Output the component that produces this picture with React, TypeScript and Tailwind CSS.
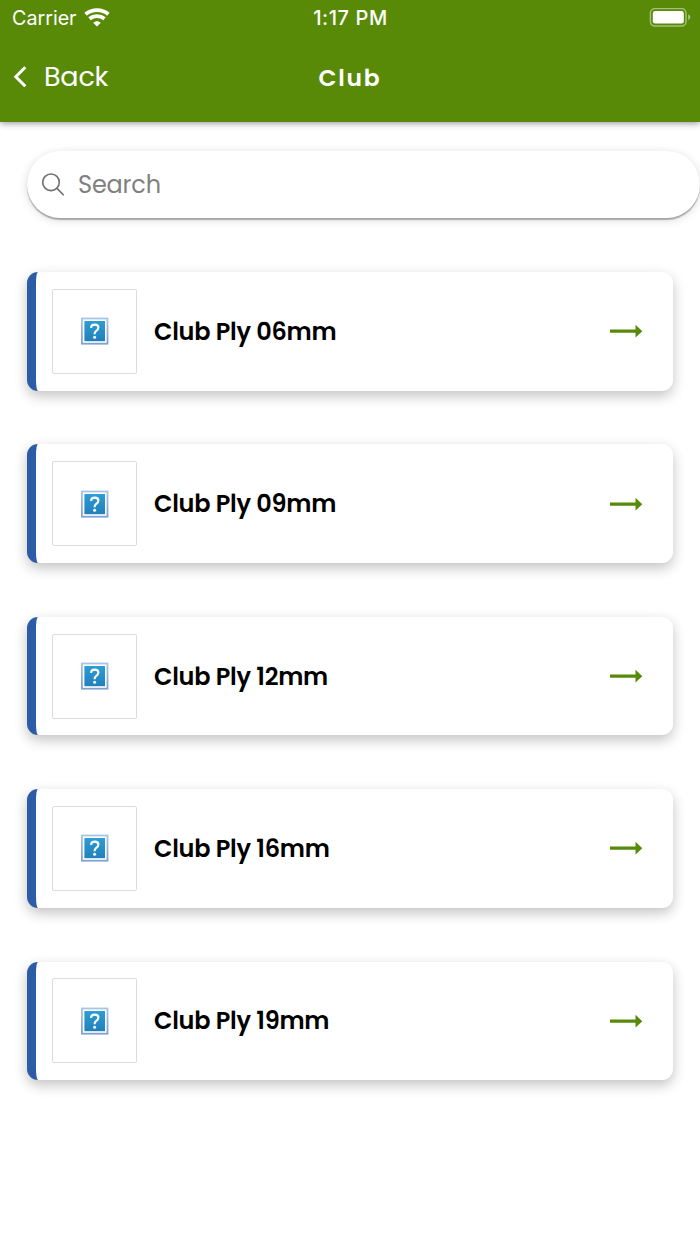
interface Product {
    id: number;
    name: string;
}

const products: Product[] = [
    { id: 1, name: 'Club Ply 06mm' },
    { id: 2, name: 'Club Ply 09mm' },
    { id: 3, name: 'Club Ply 12mm' },
    { id: 4, name: 'Club Ply 16mm' },
    { id: 5, name: 'Club Ply 19mm' },
];

function WifiIcon() {
    return (
        <svg width="26" height="20" viewBox="0 0 26 20" fill="none" stroke="white" strokeWidth="3.8">
            <path d="M1.6 6.2C8 .7 18 .7 24.4 6.2" />
            <path d="M5.5 10.8C9.8 7.2 16.2 7.2 20.5 10.8" />
            <path d="M9.2 14.7C11.4 12.6 14.6 12.6 16.8 14.7L13 18.6Z" fill="white" stroke="none" />
        </svg>
    );
}

function BatteryIcon() {
    return (
        <svg width="42" height="20" viewBox="0 0 42 20" fill="none">
            <rect x="1.4" y=".6" width="35.6" height="17.4" rx="4.5" stroke="white" strokeOpacity=".45" strokeWidth="1.5" />
            <rect x="3.8" y="3.1" width="31" height="12.4" rx="2.3" fill="white" />
            <path d="M39.2 6.2Q41.4 7 41.4 9.1T39.2 12.1Z" fill="white" fillOpacity=".5" />
        </svg>
    );
}

function MissingImage() {
    return (
        <svg width="28" height="28" viewBox="0 0 28 28">
            <defs>
                <linearGradient id="missingFill" x1="0" y1="0" x2="0" y2="1">
                    <stop offset="0%" stopColor="#2d9dd5" />
                    <stop offset="100%" stopColor="#2180ba" />
                </linearGradient>
                <linearGradient id="missingFrame" x1="0" y1="0" x2="0" y2="1">
                    <stop offset="0%" stopColor="#a9c4e7" />
                    <stop offset="100%" stopColor="#7fa1d0" />
                </linearGradient>
            </defs>
            <rect x=".9" y="1.5" width="25.6" height="25.2" fill="white" stroke="url(#missingFrame)" strokeWidth="1.8" />
            <rect x="3.4" y="4" width="20.6" height="20.2" fill="url(#missingFill)" />
            <path d="M10 10.9C10.1 8.6 11.6 7.6 13.7 7.6C16 7.6 17.4 8.8 17.4 10.6C17.4 12.3 16.5 13 15.3 13.8C14.1 14.6 13.6 15.2 13.6 16.7V17.2" fill="none" stroke="white" strokeWidth="2.1" />
            <circle cx="13.6" cy="20.2" r="1.5" fill="white" />
        </svg>
    );
}

function ProductCard({ name }: { name: string }) {
    return (
        <li className="flex h-[118.5px] items-center rounded-[11px] border-l-[9px] border-[#2b5ca5] bg-white pl-4 pr-[30px] shadow-[0_5px_13px_rgba(0,0,0,0.24)]">
            <div className="flex size-[85px] shrink-0 items-center justify-center rounded-[2px] border border-[#dcdcdc]">
                <MissingImage />
            </div>
            <h2 className="ml-[17px] flex-1 whitespace-nowrap pt-[1px] text-[24px] font-semibold leading-8 tracking-[-0.25px] text-black">{name}</h2>
            <svg width="34" height="16" viewBox="0 0 34 16" fill="#568a08">
                <path d="M1 6.5H26.5V1.8L33.3 8.2L26.5 14.6V9.8H1Z" />
            </svg>
        </li>
    );
}

export default function App() {
    return (
        <div className="flex h-[1244px] w-[700px] flex-col overflow-hidden bg-white font-['Poppins','Inter',sans-serif]">
            <header className="h-[122px] shrink-0 bg-[#588a08] text-white shadow-[0_1px_7px_rgba(0,0,0,0.45)]">
                {/* Status bar */}
                <div className="grid h-9 grid-cols-3 items-center pl-3 pr-[9px] font-['Inter',sans-serif] text-[20px]">
                    <div className="flex items-center gap-[7px]">
                        <span className="pt-[2px] text-[19.7px]">Carrier</span>
                        <WifiIcon />
                    </div>
                    <span className="pr-[2px] text-center font-medium tracking-[0.6px]">1:17 PM</span>
                    <div className="flex justify-end">
                        <BatteryIcon />
                    </div>
                </div>
                {/* Navigation bar */}
                <div className="grid h-[82px] grid-cols-3 items-center px-[13px]">
                    <button className="flex items-center gap-[17px] text-left text-[27px] tracking-[-0.2px]">
                        <svg width="14" height="22" viewBox="0 0 14 22" fill="none" stroke="white" strokeWidth="3">
                            <path d="M12.3 1.2L2.8 10.7L12.3 20.2" />
                        </svg>
                        Back
                    </button>
                    <h1 className="pt-[2px] text-center text-[23.4px] font-semibold tracking-[1.8px]">Club</h1>
                </div>
            </header>

            <main className="pl-[27px] pt-[29px]">
                <div className="flex h-[67px] items-center rounded-full bg-white pl-[15px] shadow-[0_2px_1px_rgba(0,0,0,0.28),0_2px_10px_rgba(0,0,0,0.15)]">
                    <svg width="24" height="24" viewBox="0 0 24 24" fill="none" stroke="#707070" strokeWidth="1.6">
                        <circle cx="9" cy="9.3" r="8.3" />
                        <path d="M14.8 15.1L21.7 22.3" />
                    </svg>
                    <input
                        type="text"
                        placeholder="Search"
                        className="ml-3 w-[500px] bg-transparent text-[24px] tracking-[-0.2px] outline-none placeholder:text-[#808080]"
                    />
                </div>

                <ul className="mt-[54px] flex w-[646px] flex-col gap-[53.9px]">
                    {products.map((product) => (
                        <ProductCard key={product.id} name={product.name} />
                    ))}
                </ul>
            </main>
        </div>
    );
}
